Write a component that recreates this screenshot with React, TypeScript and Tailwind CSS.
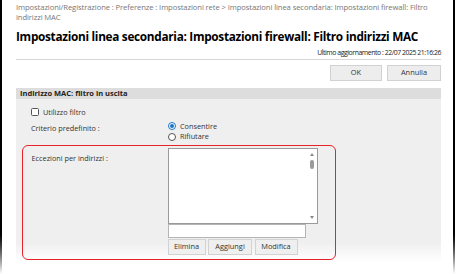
import React from "react";

const font = { fontFamily: '"Open Sans", "Noto Sans", sans-serif' };

const GrayButton: React.FC<{ label: string; className?: string }> = ({ label, className }) => (
  <button className={`h-[16px] border border-[#d2d2d2] bg-[#ededed] text-[7.4px] text-[#333] leading-none ${className ?? ""}`}>
    {label}
  </button>
);

export default function App() {
  return (
    <div className="w-[456px] h-[274px] bg-white flex overflow-hidden" style={font}>
      <div className="w-[1.5px] shrink-0 h-full bg-gradient-to-b from-black from-[84%] to-white" />
      <div className="flex-1 min-w-0 flex flex-col pl-[14.5px] pr-[12px]">
        <div className="pt-[2px] text-[7.65px] leading-[10px] text-[#777] tracking-[-0.1px] whitespace-nowrap">
          Impostazioni/Registrazione : Preferenze : Impostazioni rete &gt; Impostazioni linea secondaria: Impostazioni firewall: Filtro
          <br />
          indirizzi MAC
        </div>
        <h1 className="mt-[6px] h-[16px] text-[11.8px] leading-[16px] font-bold text-black tracking-[-0.3px] whitespace-nowrap">
          Impostazioni linea secondaria: Impostazioni firewall: Filtro indirizzi MAC
        </h1>
        <div className="mt-[4px] h-[10px] text-right text-[6.9px] leading-[10px] text-[#222] tracking-[-0.45px]">
          Ultimo aggiornamento : 22/07 2025 21:16:26
        </div>
        <div className="mt-[1px] h-px bg-[#d8d8d8]" />
        <div className="mt-[5px] flex justify-end gap-[5px]">
          <GrayButton label="OK" className="w-[52px]" />
          <GrayButton label="Annulla" className="w-[54px]" />
        </div>
        <div className="mt-[7px] h-[11px] bg-[#dddddd] pl-[4px] text-[7.5px] leading-[11px] font-bold text-[#222]">
          Indirizzo MAC: filtro in uscita
        </div>
        <div className="h-[163px] bg-gradient-to-b from-[#efefef] from-[88%] to-white pl-[6px] pt-[8px] text-[7.3px] text-[#333]">
          <div className="flex items-center gap-[4px] pl-[9px] h-[10px]">
            <span className="w-[8px] h-[8px] border border-[#555] rounded-[1.5px] bg-white" />
            <span>Utilizzo filtro</span>
          </div>
          <div className="flex mt-[4px] pl-[9px]">
            <div className="w-[137px] pt-[1.5px] leading-[10px]">Criterio predefinito :</div>
            <div className="flex flex-col gap-[0.5px]">
              <div className="flex items-center gap-[4px] h-[10px]">
                <span className="w-[8px] h-[8px] rounded-full border border-[#1a73c8] bg-white flex items-center justify-center">
                  <span className="w-[4px] h-[4px] rounded-full bg-[#1a73c8]" />
                </span>
                <span>Consentire</span>
              </div>
              <div className="flex items-center gap-[4px] h-[10px]">
                <span className="w-[8px] h-[8px] rounded-full border border-[#555] bg-white" />
                <span>Rifiutare</span>
              </div>
            </div>
          </div>
          <div className="mt-[3px] w-[314px] h-[115px] border-[1.5px] border-[#e8212b] rounded-[6px] flex pl-[8.5px] pt-[2px]">
            <div className="w-[136px] pt-[5px] leading-[10px]">Eccezioni per indirizzi :</div>
            <div className="flex flex-col">
              <div className="w-[150px] h-[76px] border border-[#9a9a9a] bg-white flex justify-end">
                <div className="w-[9px] flex flex-col items-center pt-[4px] pb-[4px]">
                  <span className="w-0 h-0 border-l-[2.5px] border-r-[2.5px] border-b-[3px] border-l-transparent border-r-transparent border-b-[#888]" />
                  <span className="mt-[4px] w-[4.5px] h-[9.5px] rounded-[2px] bg-[#9a9a9a]" />
                  <span className="mt-auto w-0 h-0 border-l-[2.5px] border-r-[2.5px] border-t-[3px] border-l-transparent border-r-transparent border-t-[#888]" />
                </div>
              </div>
              <div className="w-[138px] h-[14px] border border-[#b5b5b5] bg-white" />
              <div className="mt-[1.5px] flex gap-[2.5px]">
                <GrayButton label="Elimina" className="w-[38px] bg-[#efefef]" />
                <GrayButton label="Aggiungi" className="w-[44px] bg-[#efefef]" />
                <GrayButton label="Modifica" className="w-[43px] bg-[#efefef]" />
              </div>
            </div>
          </div>
        </div>
      </div>
      <div className="w-[2px] shrink-0 h-full bg-gradient-to-b from-black from-[84%] to-white" />
      <div className="w-[1px] shrink-0" />
    </div>
  );
}
